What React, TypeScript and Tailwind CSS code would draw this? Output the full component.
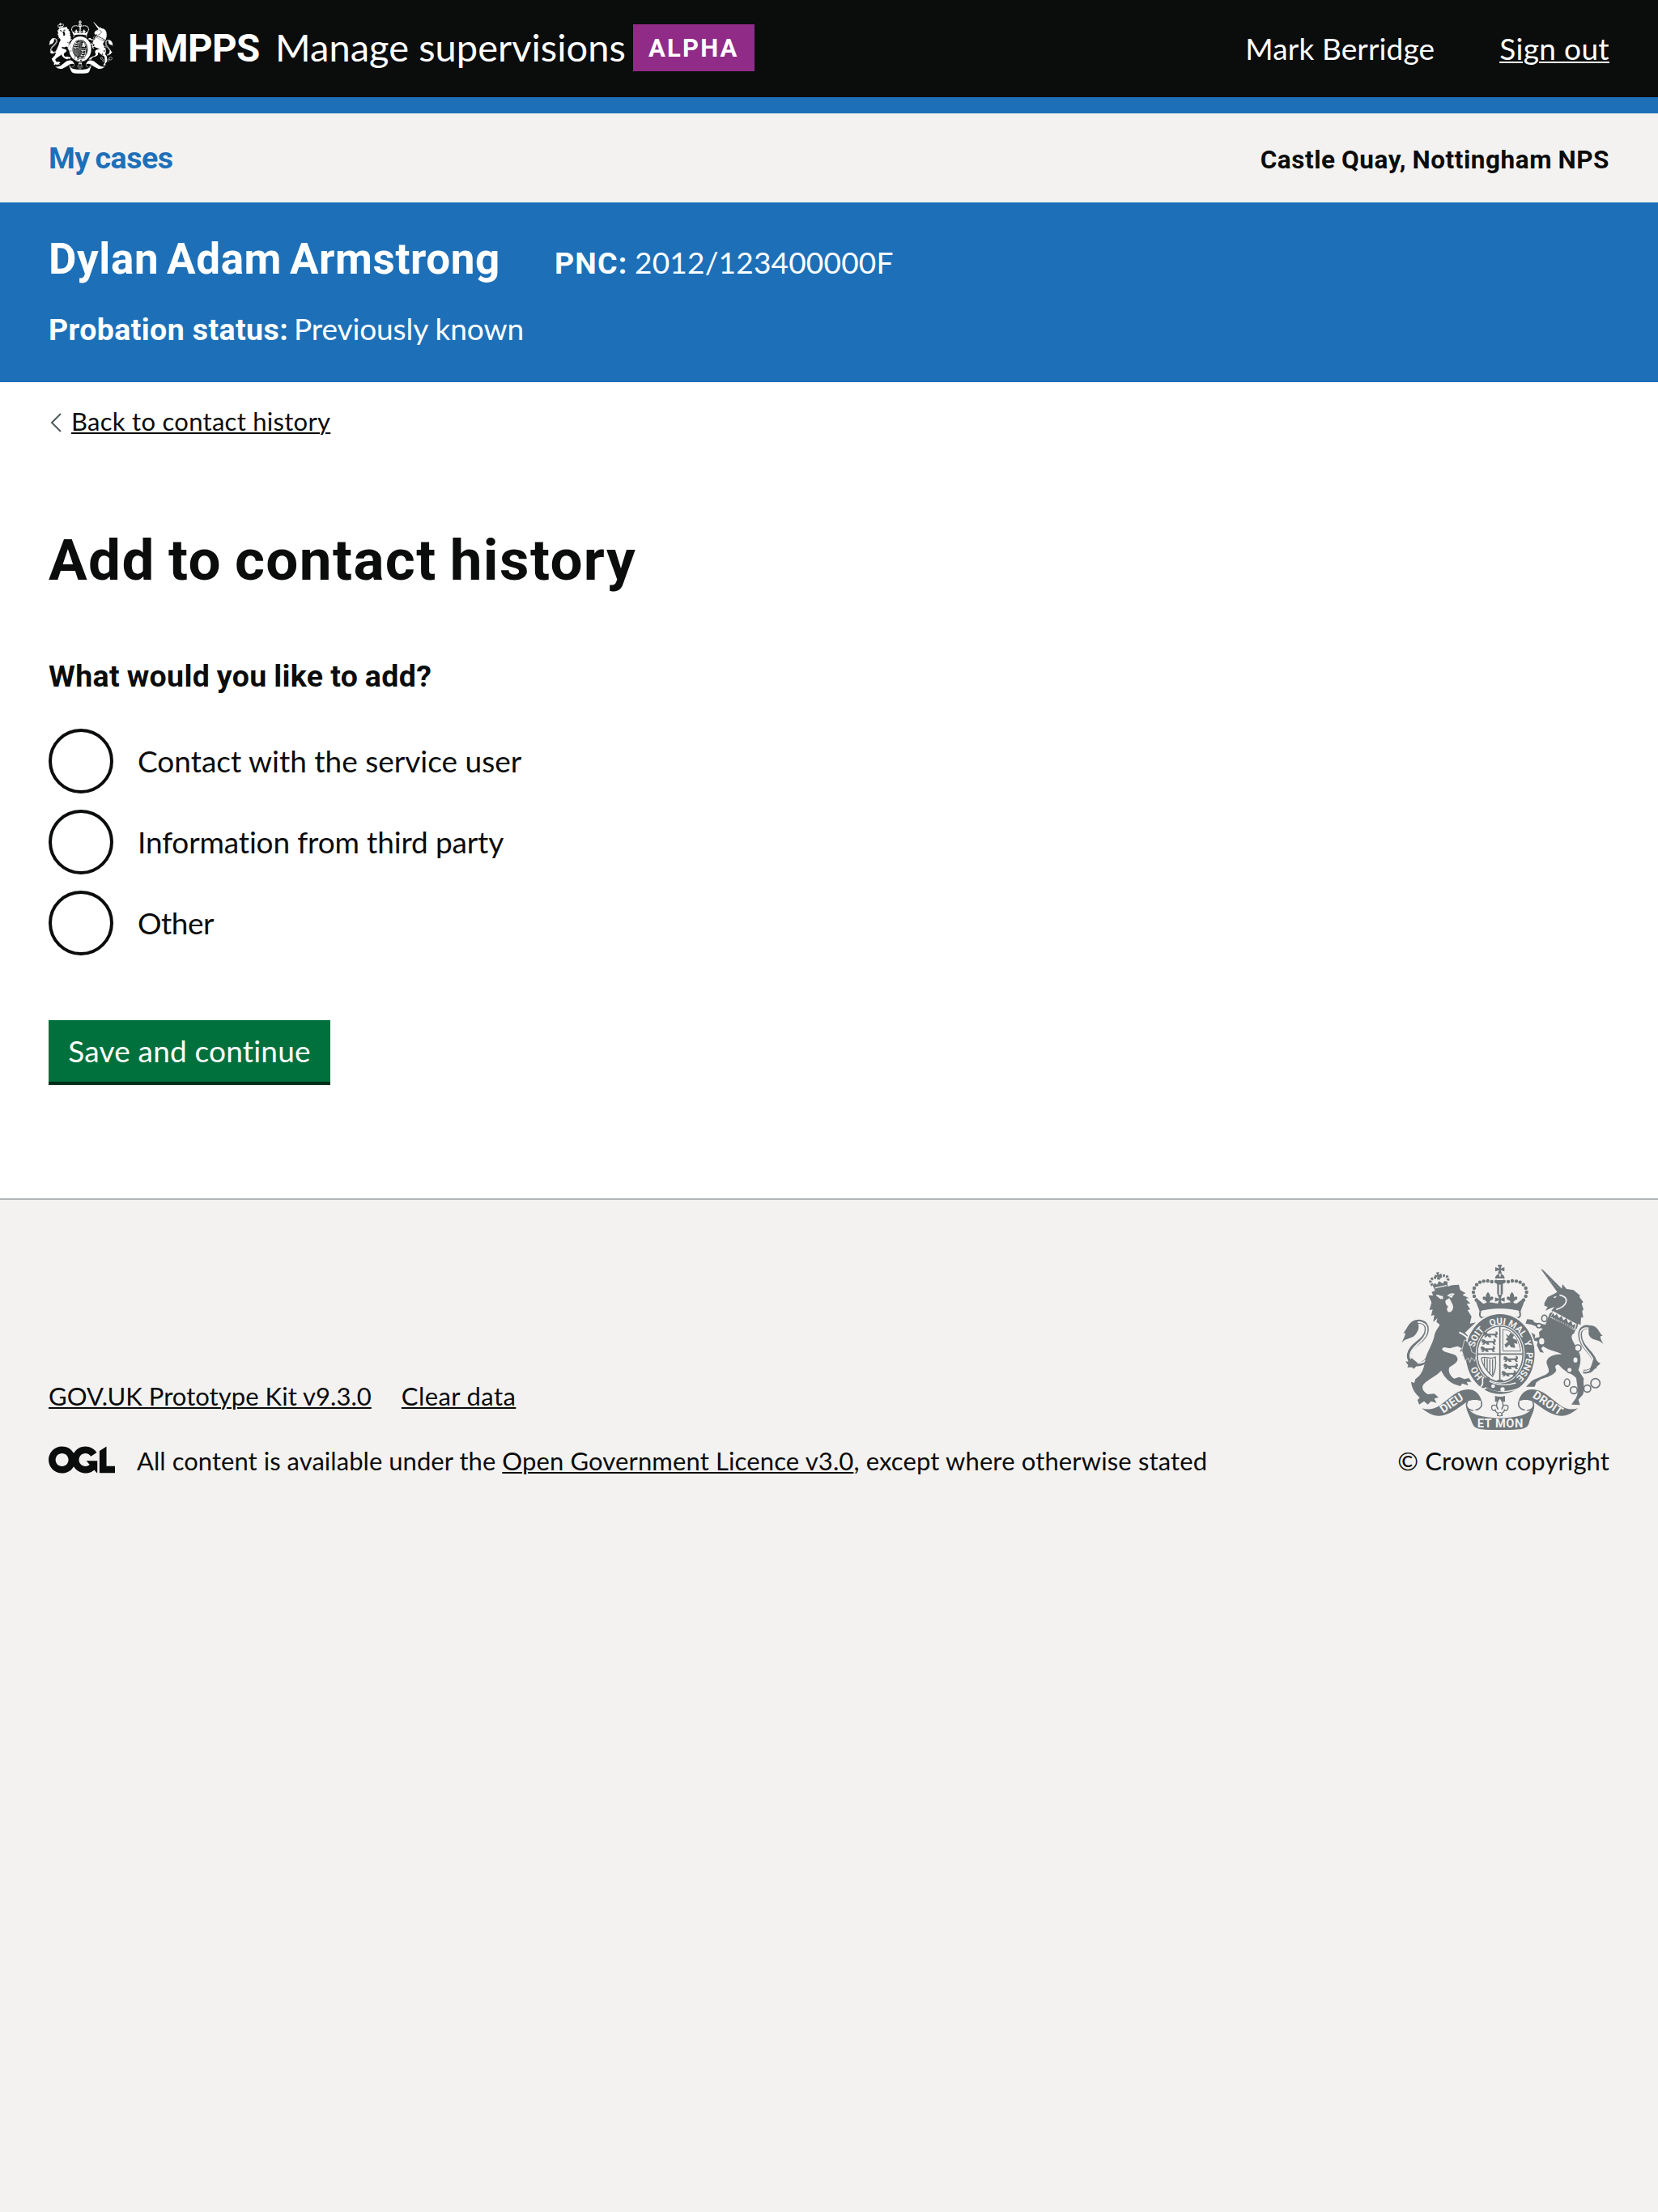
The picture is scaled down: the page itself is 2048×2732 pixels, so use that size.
import type { ReactNode } from "react";

const REGULAR = "font-['Lato','Liberation_Sans',sans-serif] font-normal";
const BOLD = "font-['Roboto','Liberation_Sans',sans-serif] font-bold";
const LINK = "underline decoration-2 underline-offset-[2px]";

const ARCH_BEADS = [
  [417, 128], [401, 129], [386, 126], [371, 127], [357, 131], [345, 140], [336, 153], [333, 168], [336, 183], [344, 197],
];

const MOTTO: [string, string][] = [
  ["HO", "14.5%"],
  ["SOIT", "34.5%"],
  ["QUI", "48.6%"],
  ["MAL", "59.8%"],
  ["Y", "69.4%"],
  ["PENSE", "82%"],
];

function Fleur({ x, y, s }: { x: number; y: number; s: number }) {
  return (
    <path
      transform={`translate(${x} ${y}) scale(${s})`}
      d="M0-20C9-10 9-3 4 5C6-6 18-8 18 1C18 7 12 9 10 6C9 11 5 13 4 13L7 20H-7L-4 13C-5 13-9 11-10 6C-12 9-18 7-18 1C-18-8-6-6-4 5C-9-3-9-10 0-20Z"
    />
  );
}

function CrossPattee({ x, y, s }: { x: number; y: number; s: number }) {
  return (
    <path
      transform={`translate(${x} ${y}) scale(${s})`}
      d="M-8-17H8L3-3L17-8V8L3 3L8 17H-8L-3 3L-17 8V-8L-3-3Z"
    />
  );
}

function PassantLion({ x, y }: { x: number; y: number }) {
  return (
    <path
      transform={`translate(${x} ${y})`}
      d="M-30-4L-24-11L-16-8L-12-3H12C20-3 20-9 14-11C22-14 28-8 24 0L20 4L26 10H17L12 3H-2L2 10H-8L-13 4L-18 10H-26L-20 3L-30 4L-25-1Z"
    />
  );
}

function RoyalArms({ className, ground, motto }: { className: string; ground: string; motto: boolean }) {
  return (
    <svg viewBox="66 66 750 612" className={className} fill="currentColor" stroke="none">
      {/* crown */}
      <CrossPattee x={431} y={83} s={1} />
      <path d="M413 117C415 105 421 101 429 101V110H434V101C442 101 447 105 449 117Z" />
      <path d="M412 123H451C451 134 442 140 431 140C420 140 412 134 412 123Z" />
      {ARCH_BEADS.map(([x, y]) => (
        <g key={x}>
          <circle cx={x} cy={y} r="6.6" />
          <circle cx={863 - x} cy={y} r="6.6" />
        </g>
      ))}
      <path d="M421 138H428V176H421ZM434 138H442V176H434Z" />
      <Fleur x={387} y={189} s={1.1} />
      <Fleur x={476} y={189} s={1.1} />
      <CrossPattee x={431} y={195} s={1.05} />
      <path d="M342 189C356 198 362 205 370 211C392 201 404 208 431 211C458 208 470 201 492 211C501 205 508 198 521 189C524 208 512 222 508 240C478 225 385 225 356 240C352 222 340 208 342 189Z" />
      <path
        d="M360 238C352 252 358 260 366 264C405 250 460 250 497 264C506 260 511 252 503 238"
        fill="none"
        stroke="currentColor"
        strokeWidth="6"
      />

      {/* lion tail */}
      <path
        d="M165 412C140 450 92 438 94 400C98 360 160 350 160 305C160 276 128 270 106 286"
        fill="none"
        stroke="currentColor"
        strokeWidth="15"
      />
      <path
        d="M160 416C140 440 98 430 99 400C104 364 160 350 160 305C160 282 132 272 112 286"
        fill="none"
        stroke={ground}
        strokeWidth="6"
      />
      <path d="M124 272C92 272 90 304 72 320C84 316 84 322 66 358C84 332 110 346 124 316C134 300 130 288 124 272Z" />
      <path d="M104 412C94 424 92 428 82 424C86 436 96 436 88 446C100 448 108 442 110 452C120 448 122 440 126 430Z" />

      {/* lion */}
      <path d="M166 180L184 180L178 167L215 153L255 142L279 140L284 160L304 172L292 178L316 190L304 192L322 210L308 210L321 232L311 234L326 258L320 284L342 280L318 302L302 318L326 344L334 378L344 402L338 420L326 408L324 424L314 408L304 420L304 400L292 404L298 390L282 386L290 376L274 368L245 376L225 372C212 376 216 384 232 390L264 400C280 412 276 424 262 434L244 446C238 460 246 478 262 488L280 482L300 490L316 486L326 500L308 500L314 514L292 506L284 516L266 510C246 502 224 484 214 458C200 478 164 490 146 512C140 526 150 538 164 546L188 544L204 558L188 562L196 578L176 572L164 584L150 572L132 584L126 568L134 558C120 546 106 530 102 500L114 504L118 490C146 472 150 446 156 412C162 388 184 356 188 330C192 308 206 298 208 288L196 278L200 264L184 278L188 252L176 256L182 232L170 234L178 206Z" />
      <path
        d="M280 316C310 330 330 350 338 384M196 180C206 178 214 186 220 192M238 182C246 174 256 174 262 176"
        fill="none"
        stroke={ground}
        strokeWidth="6"
      />
      <path d="M196 181L222 182L212 194ZM240 182L260 178L252 190ZM230 198L244 190L256 214C262 230 252 242 243 242C234 240 232 226 240 222C230 214 228 208 230 198Z" fill={ground} />
      <g transform="rotate(-13 208 130)">
        <path d="M180 136L190 130L196 138L206 126L218 138L226 130L236 136L232 158H184Z" />
        <path d="M186 148H230" stroke={ground} strokeWidth="4" />
        <path
          d="M180 136C162 112 196 104 208 116C220 104 254 112 236 136"
          fill="none"
          stroke="currentColor"
          strokeWidth="10"
          strokeDasharray="8 4"
        />
        <CrossPattee x={208} y={106} s={0.75} />
      </g>

      {/* unicorn tail */}
      <path
        d="M740 462C772 466 790 440 780 416C768 388 728 366 728 326C728 300 748 292 768 300"
        fill="none"
        stroke="currentColor"
        strokeWidth="14"
      />
      <path
        d="M742 461C770 462 785 440 776 416C764 390 728 366 728 326C728 304 746 296 764 302"
        fill="none"
        stroke={ground}
        strokeWidth="5"
      />
      <path d="M760 292C792 286 796 316 812 330C800 328 800 334 816 362C796 338 772 352 760 324Z" />
      <path d="M780 410C792 420 794 430 804 430C798 442 790 438 788 452C778 448 770 458 762 462Z" />

      {/* unicorn */}
      <path d="M582 81L592 86L664 158L644 168Z" />
      <path
        d="M590 96L652 158"
        stroke={ground}
        strokeWidth="1.6"
        strokeDasharray="3 8"
      />
      <path d="M596 208L608 186L632 174L660 158L663 138L678 156L704 160L728 180L726 186L740 204L734 210L741 232L736 238L740 262L732 262L730 290L722 284L716 304C688 282 654 262 622 236L634 222L618 228L600 236L608 222L596 218Z" />
      <path d="M652 178C690 186 684 218 640 232" fill="none" stroke={ground} strokeWidth="5" />
      <path d="M628 186L642 182L636 190Z" fill={ground} />
      <path d="M616 246L628 240C650 264 684 284 716 296L706 320C684 330 708 356 722 386C736 410 728 440 722 456L742 488C738 508 748 528 738 548L722 566L728 586L696 584L712 562C726 540 716 510 714 486C700 470 684 468 664 452L648 436C630 440 638 446 640 458C630 478 604 482 584 490L566 502L560 518L528 518L550 496C578 480 600 478 612 464C614 452 606 440 604 430C602 410 630 396 664 398C640 386 612 384 592 368L584 376L594 392L580 390L568 364L572 350L548 346L536 336L548 318L562 326L560 338L578 334L576 316L590 304L580 300L548 288L526 284L532 268L552 270L560 280L578 284L600 288Z" />
      <path d="M628 238L716 286L708 308L618 262Z" fill={ground} />
      <path d="M620 260L628 244L634 256L642 248L650 264L660 256L666 272L678 264L684 282L696 274L700 290L712 286L706 304C680 296 646 278 620 260Z" />
      <path d="M624 262L704 300" stroke={ground} strokeWidth="3" strokeDasharray="4 5" />
      <g fill={ground} stroke="currentColor" strokeWidth="5">
        <ellipse cx="596" cy="265" rx="10" ry="12" />
        <ellipse cx="576" cy="292" rx="9" ry="8" />
        <ellipse cx="586" cy="350" rx="12" ry="14" />
        <circle cx="720" cy="375" r="12" />
        <ellipse cx="711" cy="419" rx="10" ry="12" />
        <circle cx="689" cy="456" r="10" />
        <ellipse cx="680" cy="503" rx="10" ry="14" />
        <circle cx="705" cy="531" r="13" />
        <circle cx="755" cy="525" r="13" />
        <circle cx="785" cy="505" r="17" />
      </g>

      {/* garter and shield */}
      <ellipse cx="432" cy="397" rx="134" ry="154" fill={ground} />
      <ellipse cx="432" cy="397" rx="128" ry="148" />
      <ellipse cx="432" cy="397" rx="91" ry="109" fill={ground} />
      <ellipse cx="432" cy="397" rx="85" ry="103" fill="none" stroke="currentColor" strokeWidth="5" />
      <path d="M431 294V500M347 397H517" fill="none" stroke="currentColor" strokeWidth="5" />
      <path d="M418 500L424 492H440L448 502Z" />
      <PassantLion x={398} y={325} />
      <PassantLion x={391} y={352} />
      <PassantLion x={388} y={379} />
      <PassantLion x={473} y={416} />
      <PassantLion x={473} y={443} />
      <PassantLion x={466} y={470} />
      <path d="M452 322L464 330L470 318L484 326L478 338L494 346L496 360L484 356L488 374L472 372L466 362L454 374L448 362L462 350L452 342L460 336Z" />
      <path d="M442 306V386H508M442 306C470 306 500 330 508 386" fill="none" stroke="currentColor" strokeWidth="3" />
      <path
        d="M362 412C380 402 392 420 414 408C418 440 412 466 404 480C386 464 366 440 362 412M374 412V446M384 414V460M394 416V470M404 416V474"
        fill="none"
        stroke="currentColor"
        strokeWidth="4"
      />
      {/* lion's forepaw and unicorn's hoof overlap the garter */}
      <path d="M300 344C316 352 324 372 326 388L344 398L338 424L326 410L320 428L314 412L302 422L290 384Z" stroke={ground} strokeWidth="2" />
      <path d="M512 330L538 320L552 344L530 350L540 368L526 360Z" />
      {/* buckle and strap */}
      <path
        d="M372 482C358 492 376 504 362 516C354 526 372 530 382 520C420 540 470 540 512 520L530 512"
        fill="none"
        stroke={ground}
        strokeWidth="5"
      />
      <path d="M380 484C394 476 396 492 392 500C420 520 460 520 494 508L504 520C460 540 410 540 376 518C370 504 386 498 380 484Z" />
      <path d="M392 498C424 514 460 514 490 504" fill="none" stroke={ground} strokeWidth="4" />
      <circle cx="406" cy="516" r="7" fill={ground} />
      <circle cx="441" cy="528" r="8" fill={ground} />

      {/* pendant */}
      <path d="M413 552C425 556 439 556 450 552V574H413Z" />
      <g fill={ground} stroke="currentColor" strokeWidth="3">
        <path
          transform="translate(431 594) scale(1.7)"
          strokeWidth="2.4"
          d="M0-20C9-10 9-3 4 5C6-6 18-8 18 1C18 7 12 9 10 6C9 11 5 13 4 13L5 18H-5L-4 13C-5 13-9 11-10 6C-12 9-18 7-18 1C-18-8-6-6-4 5C-9-3-9-10 0-20Z"
        />
        <circle cx="431" cy="620" r="7" />
      </g>

      {/* ribbon */}
      <path d="M142 598C166 606 190 600 208 588L262 546C284 530 308 524 330 530C350 538 360 556 364 572C346 564 326 566 312 572C282 592 254 616 222 624C190 632 166 618 142 598Z" />
      <path d="M720 598C696 606 672 600 656 588L602 546C580 530 556 524 534 530C514 538 504 556 500 572C518 564 538 566 552 572C582 592 610 616 642 624C674 632 698 618 720 598Z" />
      <path
        d="M312 572C302 586 308 606 334 606C358 604 368 590 362 572M552 572C560 586 556 606 530 606C506 604 496 590 502 572"
        fill="none"
        stroke="currentColor"
        strokeWidth="5"
      />
      <path d="M306 582C312 606 328 616 350 624C400 638 464 638 512 624C536 616 550 606 558 582C562 606 544 630 538 656C532 670 520 674 500 676C456 680 408 680 364 676C344 674 334 668 328 652C322 630 304 606 306 582Z" />
      <path d="M334 588C326 600 338 610 352 614M530 588C538 600 526 610 512 614" fill="none" stroke={ground} strokeWidth="6" />

      {motto && (
        <g fill={ground} className={BOLD}>
          <path id="garter" d="M432 507A97 110 0 0 1 432 287A97 110 0 0 1 432 507" fill="none" />
          {MOTTO.map(([word, at]) => (
            <text key={word} fontSize="34" textAnchor="middle">
              <textPath href="#garter" startOffset={at}>
                {word}
              </textPath>
            </text>
          ))}
          <text fontSize="43" textAnchor="middle" transform="translate(260 591) rotate(-34)">DIEU</text>
          <text fontSize="43" textAnchor="middle" transform="translate(601 591) rotate(34)">DROIT</text>
          <text fontSize="44" textAnchor="middle" x="432" y="668" textLength="170">ET MON</text>
        </g>
      )}
    </svg>
  );
}

function OglLogo() {
  return (
    <svg viewBox="0 0 483.2 195.7" className="mt-[2px] h-[34px] w-[82px]" fill="currentColor">
      <path d="M421.5 142.8V.1l-50.7 32.3v161.1h112.4v-50.7zm-122.3-9.6A47.12 47.12 0 0 1 221 97.8c0-26 21.1-47.1 47.1-47.1 16.7 0 31.4 8.7 39.7 21.8l42.7-27.2A97.63 97.63 0 0 0 268.1 0c-36.5 0-68.3 20.1-85.1 49.7A98 98 0 0 0 97.8 0C43.9 0 0 43.9 0 97.8s43.9 97.8 97.8 97.8c36.5 0 68.3-20.1 85.1-49.7a97.76 97.76 0 0 0 149.6 25.4l19.4 22.2h3v-87.8h-80l24.3 27.5zM97.8 145c-26 0-47.1-21.1-47.1-47.1s21.1-47.1 47.1-47.1 47.1 21.1 47.1 47.1S123.8 145 97.8 145" />
    </svg>
  );
}

function Radio({ children }: { children: ReactNode }) {
  return (
    <label className="flex h-20 items-center gap-[30px] text-[37px] leading-[50px]">
      <input type="radio" name="contact-type" className="size-20 appearance-none rounded-full border-4 border-[#0b0c0c] bg-white" />
      {children}
    </label>
  );
}

export default function App() {
  return (
    <div className={`flex min-h-screen w-full flex-col whitespace-nowrap bg-[#f3f2f1] text-[#0b0c0c] ${REGULAR}`}>
      <header className="flex h-[140px] justify-between border-b-20 border-[#1d70b8] bg-[#0b0c0c] px-[60px] text-white">
        <div className="flex">
          <RoyalArms className="mt-6 h-[68px] w-20" ground="#0b0c0c" motto={false} />
          <div className="flex items-baseline pt-[30px] pl-[18px] text-[47px] leading-[56px]">
            <span className={`w-[182px] text-[47.5px] tracking-[-0.6px] ${BOLD}`}>HMPPS</span>
            <span className="w-[442px] tracking-[0.05px]">Manage supervisions</span>
          </div>
          <strong className={`mt-[30px] h-[58px] w-[150px] bg-[#912b88] pl-[19px] text-[31px] leading-[60px] tracking-[2.2px] ${BOLD}`}>
            ALPHA
          </strong>
        </div>
        <nav className="flex gap-[80px] pt-[38px] text-[37px] leading-[44px]">
          <span className="tracking-[0.13px]">Mark Berridge</span>
          <a className={`tracking-[0.35px] ${LINK}`}>Sign out</a>
        </nav>
      </header>

      <div className={`flex h-[110px] items-baseline justify-between px-[60px] pt-[30px] leading-[50px] ${BOLD}`}>
        <a className="text-[37.5px] tracking-[-0.5px] [word-spacing:-2px] text-[#1d70b8]">My cases</a>
        <span className="text-[31.5px] tracking-[0.55px] [word-spacing:-1px]">Castle Quay, Nottingham NPS</span>
      </div>

      <section className="h-[222px] bg-[#1d70b8] px-[60px] pt-10 text-[37px] text-white">
        <div className="flex items-baseline leading-[60px]">
          <h2 className={`w-[625px] text-[53px] tracking-[0.6px] [word-spacing:-4px] ${BOLD}`}>Dylan Adam Armstrong</h2>
          <span className={`w-[99px] text-[37.5px] tracking-[1.2px] ${BOLD}`}>PNC:</span>
          <span className="tracking-[0.2px]">2012/123400000F</span>
        </div>
        <div className="mt-[26px] flex items-baseline leading-[50px]">
          <span className={`w-[303px] text-[37.5px] tracking-[0.4px] ${BOLD}`}>Probation status:</span>
          <span className="tracking-[-0.1px]">Previously known</span>
        </div>
      </section>

      <main className="flex h-[1008px] flex-col items-start bg-white px-[60px] pt-7">
        <a className="flex items-center text-[31px] leading-10 tracking-[0.28px]">
          <svg viewBox="0 0 14 24" className="mt-1 mr-[12px] ml-[2px] h-6 w-[14px]" fill="none" stroke="#505a5f" strokeWidth="2">
            <path d="M13 1L2 12L13 23" />
          </svg>
          <span className={LINK}>Back to contact history</span>
        </a>
        <h1 className={`mt-28 text-[71px] leading-20 tracking-[1.4px] [word-spacing:-3px] ${BOLD}`}>Add to contact history</h1>
        <form className="contents">
          <h2 className={`mt-[78px] text-[37.5px] leading-[50px] tracking-[0.35px] [word-spacing:-1px] ${BOLD}`}>
            What would you like to add?
          </h2>
          <div className="mt-10 flex flex-col gap-5">
            <Radio>
              <span>Contact with the service user</span>
            </Radio>
            <Radio>
              <span className="tracking-[-0.15px]">Information from third party</span>
            </Radio>
            <Radio>
              <span className="tracking-[-0.5px]">Other</span>
            </Radio>
          </div>
          <button
            type="button"
            className="mt-20 h-20 w-[348px] border-b-4 border-[#002d18] bg-[#00703c] text-[37px] tracking-[0.19px] text-white"
          >
            Save and continue
          </button>
        </form>
      </main>

      <footer className="flex items-end justify-between border-t-2 border-[#b1b4b6] px-[60px] pt-20 text-[31px] leading-10">
        <div>
          <nav className="flex gap-[37px]">
            <a className={`tracking-[0.04px] ${LINK}`}>GOV.UK Prototype Kit v9.3.0</a>
            <a className={`tracking-[0.4px] ${LINK}`}>Clear data</a>
          </nav>
          <div className="mt-10 flex gap-[27px]">
            <OglLogo />
            <p className="tracking-[0.13px]">
              <span className="tracking-[0.04px]">All content is available under the </span>
              <a className={LINK}>Open Government Licence v3.0</a>, except where otherwise stated
            </p>
          </div>
        </div>
        <div className="flex flex-col items-center">
          <RoyalArms className="mr-[2px] h-[204px] w-[250px] text-[#6f777b]" ground="#f3f2f1" motto />
          <span className="mt-[18px] tracking-[0.1px]">© Crown copyright</span>
        </div>
      </footer>
    </div>
  );
}
